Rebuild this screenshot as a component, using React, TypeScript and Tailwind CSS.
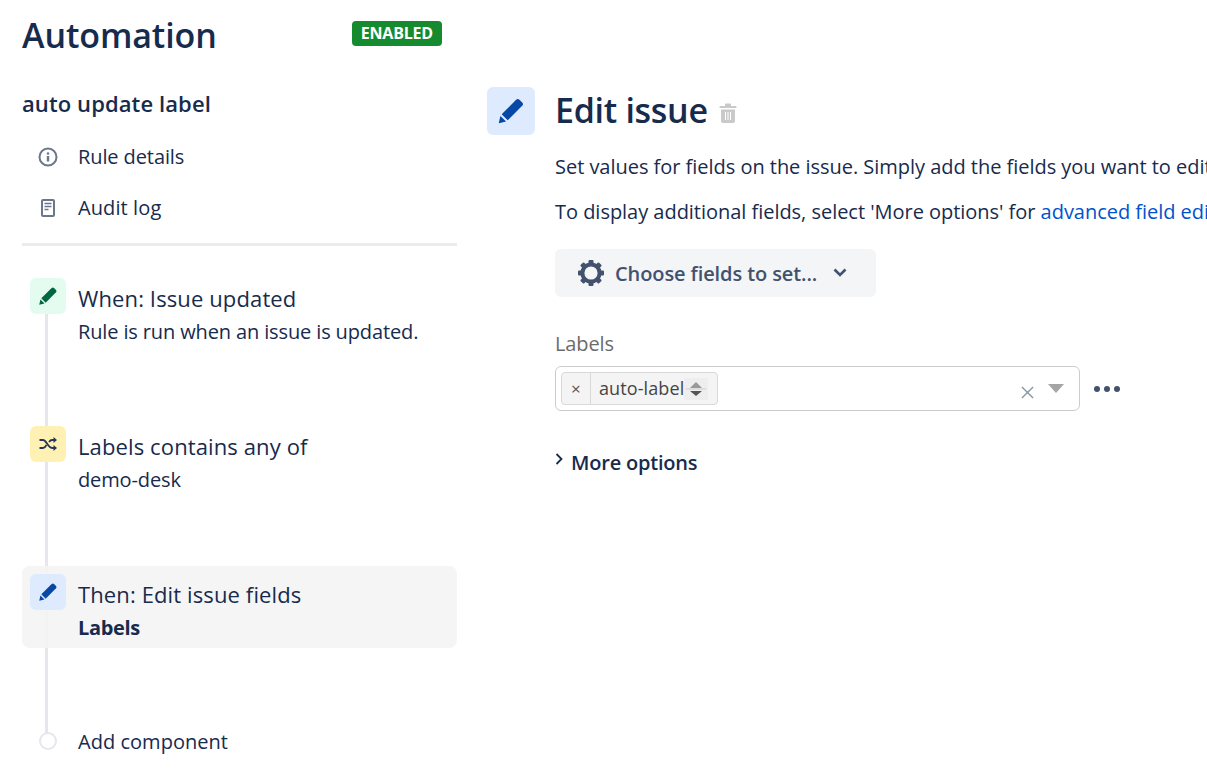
import React from "react";

function Pencil({ className }: { className: string }) {
  return (
    <svg viewBox="0 0 24 24" className={className} fill="currentColor">
      <path d="M16.4 2.4a2 2 0 0 1 2.8 0l2.4 2.4a2 2 0 0 1 0 2.8L9.2 20l-5.2-5.2z" />
      <path d="M2.9 16.2l4.9 4.9L1.5 22.5z" />
    </svg>
  );
}

function Step({
  icon,
  bg,
  title,
  sub,
  bold,
  selected,
}: {
  icon: React.ReactNode;
  bg: string;
  title: string;
  sub: string;
  bold?: boolean;
  selected?: boolean;
}) {
  return (
    <div className={selected ? "h-[82px] rounded-lg bg-[#f4f4f4]/90 px-2 pt-2 flex relative" : "h-[148px] px-2 flex relative"}>
      <div className={"w-9 h-9 rounded-md flex items-center justify-center shrink-0 " + bg}>{icon}</div>
      <div className="ml-3">
        <div className="text-[22px] leading-[26px] mt-[7px] text-[#172b4d] tracking-[0.12px]">{title}</div>
        <div className={"text-[20px] leading-[26px] mt-[8px] text-[#172b4d] " + (bold ? "font-bold tracking-[-0.35px]" : "tracking-[-0.13px]")}>{sub}</div>
      </div>
    </div>
  );
}

export default function App() {
  return (
    <div className="w-[1207px] h-[775px] overflow-hidden bg-white flex font-['Open_Sans',sans-serif] text-[#172b4d]">
      <div className="w-[435px] ml-[22px] shrink-0">
        <div className="flex items-start justify-between pr-[15px] pt-[13px] h-[72px]">
          <h1 className="text-[34px] leading-[44px] font-semibold tracking-[-0.1px]">Automation</h1>
          <span className="mt-2 h-[25px] px-[9px] rounded bg-[#158a2e] text-white text-[16px] leading-[25px] font-bold tracking-[-0.2px]">ENABLED</span>
        </div>
        <div className="text-[22px] leading-[28px] font-semibold mt-[17px] tracking-[0.1px]">auto update label</div>
        <div className="flex items-center h-[24px] mt-[28px] text-[20px] tracking-[-0.1px]">
          <svg viewBox="0 0 20 20" className="w-5 h-5 ml-4 text-[#6b778c]" fill="none">
            <circle cx="10" cy="10" r="8.5" stroke="currentColor" strokeWidth="2" />
            <circle cx="10" cy="6.5" r="1.3" fill="currentColor" />
            <rect x="8.8" y="9" width="2.4" height="5.5" rx="0.6" fill="currentColor" />
          </svg>
          <span className="ml-5">Rule details</span>
        </div>
        <div className="flex items-center h-[24px] mt-[27px] text-[20px] tracking-[0.1px]">
          <svg viewBox="0 0 14 18" className="w-[14px] h-[20px] ml-[19px] text-[#6b778c]" fill="none">
            <rect x="1" y="1" width="12" height="16" rx="1" stroke="currentColor" strokeWidth="2" />
            <path d="M3.5 4.5h7M3.5 7.5h7M3.5 10.5h4" stroke="currentColor" strokeWidth="1.4" />
          </svg>
          <span className="ml-[23px]">Audit log</span>
        </div>
        <div className="h-[3px] bg-[#ebecf0] mt-[23px]" />
        <div className="relative mt-[32px]">
          <div className="absolute left-[23px] top-[36px] w-[3px] h-[420px] bg-[#e6e7ee]" />
          <Step
            bg="bg-[#e3fcef]"
            icon={<Pencil className="w-[20px] h-[20px] text-[#006644]" />}
            title="When: Issue updated"
            sub="Rule is run when an issue is updated."
          />
          <Step
            bg="bg-[#fff0b3]"
            icon={
              <svg viewBox="0 0 20 20" className="w-[20px] h-[20px] text-[#253858]" fill="none" stroke="currentColor" strokeWidth="1.8">
                <path d="M1.5 6h3.5c3.5 0 5 8 9 8h3.5M1.5 14h3.5c1.6 0 2.6-1.4 3.5-3M11 8c.9-1.2 1.8-2 3-2h3.5" />
                <path d="M15.5 3l3.5 3-3.5 3zM15.5 11l3.5 3-3.5 3z" fill="currentColor" stroke="none" />
              </svg>
            }
            title="Labels contains any of"
            sub="demo-desk"
          />
          <div className="-mt-2">
            <Step
              selected
              bold
              bg="bg-[#deebff]"
              icon={<Pencil className="w-[20px] h-[20px] text-[#0747a6]" />}
              title="Then: Edit issue fields"
              sub="Labels"
            />
          </div>
          <div className="flex items-center h-[24px] mt-[82px] text-[20px] tracking-[0.03px]">
            <div className="relative w-[18px] h-[18px] ml-[17px] -mt-[2px] rounded-full border-2 border-[#e6e7ee] bg-white" />
            <span className="ml-[21px]">Add component</span>
          </div>
        </div>
      </div>

      <div className="ml-[30px] pt-[87px] flex-1 min-w-0 flex overflow-hidden">
        <div className="w-12 h-12 rounded-md bg-[#deebff] flex items-center justify-center shrink-0">
          <Pencil className="w-[28px] h-[28px] text-[#0747a6]" />
        </div>
        <div className="ml-5 w-[700px] shrink-0">
          <div className="flex items-center h-[48px]">
            <h2 className="text-[34px] leading-[48px] -mt-[2px] font-semibold -tracking-[0.3px]">Edit issue</h2>
            <svg viewBox="0 0 18 20" className="w-[18px] h-[20px] ml-[11px] mt-[3px] text-[#c9c9c9]" fill="currentColor">
              <path d="M6 1.5A1 1 0 0 1 7 .5h4a1 1 0 0 1 1 1V3h4.5a1 1 0 0 1 1 1v1h-17V4a1 1 0 0 1 1-1H6z" />
              <path d="M2 6.5h14V18a2 2 0 0 1-2 2H4a2 2 0 0 1-2-2zM6 9v8h1V9zm2.5 0v8h1V9zM11 9v8h1V9z" fillRule="evenodd" />
            </svg>
          </div>
          <p className="text-[20px] leading-[26px] mt-[19px] whitespace-nowrap tracking-[-0.03px]">Set values for fields on the issue. Simply add the fields you want to edit</p>
          <p className="text-[20px] leading-[26px] mt-[19px] whitespace-nowrap tracking-[-0.03px]">To display additional fields, select 'More options' for <span className="text-[#0052cc]">advanced field edi</span></p>
          <div className="mt-[24px] w-[321px] h-12 rounded-md bg-[#f4f5f7] flex items-center pl-[22px] text-[#42526e] text-[20px] font-semibold tracking-[-0.1px]">
            <svg viewBox="0 0 28 28" className="w-[28px] h-[28px]" fill="currentColor">
              <circle cx="14" cy="14" r="8.6" fill="none" stroke="currentColor" strokeWidth="4" />
              <g>
                <rect x="11.5" y="1" width="5" height="5" rx="1" />
                <rect x="11.5" y="22" width="5" height="5" rx="1" />
                <rect x="1" y="11.5" width="5" height="5" rx="1" />
                <rect x="22" y="11.5" width="5" height="5" rx="1" />
                <rect x="11.5" y="1" width="5" height="5" rx="1" transform="rotate(45 14 14)" />
                <rect x="11.5" y="22" width="5" height="5" rx="1" transform="rotate(45 14 14)" />
                <rect x="1" y="11.5" width="5" height="5" rx="1" transform="rotate(45 14 14)" />
                <rect x="22" y="11.5" width="5" height="5" rx="1" transform="rotate(45 14 14)" />
              </g>
            </svg>
            <span className="ml-[10px] mt-[2px]">Choose fields to set...</span>
            <svg viewBox="0 0 14 10" className="w-[14px] h-[10px] ml-[16px]" fill="none" stroke="currentColor" strokeWidth="2.6">
              <path d="M1.5 1.5L7 7l5.5-5.5" />
            </svg>
          </div>
          <div className="mt-[34px] text-[20px] leading-[26px] text-[#6b6b6b] tracking-[-0.1px]">Labels</div>
          <div className="flex items-center mt-[9px]">
            <div className="w-[525px] h-[45px] rounded-md border border-[#cccccc] flex items-center pl-[5px] pr-4">
              <div className="h-[33px] rounded border border-[#d9d9d9] bg-[#f4f4f4] flex items-center text-[#444] text-[18px] tracking-[0.1px]">
                <span className="w-[29px] h-full border-r border-[#d9d9d9] flex items-center justify-center text-[#555] text-[17px]">×</span>
                <span className="pl-2">auto-label</span>
                <svg viewBox="0 0 24 22" className="w-[24px] h-[22px] mr-[9px] bg-[#eeeeee]">
                  <path d="M12 4l6 6H6z" fill="#999" />
                  <path d="M2 11h20" stroke="#ccc" />
                  <path d="M12 18l6-5H6z" fill="#555" />
                </svg>
              </div>
              <div className="flex-1" />
              <svg viewBox="0 0 14 14" className="w-[13px] h-[13px] mt-2 mr-[14px] text-[#8a96a3]" stroke="currentColor" strokeWidth="1.5">
                <path d="M1 1l12 12M13 1L1 13" />
              </svg>
              <svg viewBox="0 0 16 9" className="w-4 h-[9px] -mt-[1px] -mr-[1px] text-[#a5a5a5]" fill="currentColor">
                <path d="M0 0h16L8 9z" />
              </svg>
            </div>
            <div className="flex gap-1 ml-[14px] mt-[1px]">
              <span className="w-[6px] h-[6px] rounded-full bg-[#42526e]" />
              <span className="w-[6px] h-[6px] rounded-full bg-[#42526e]" />
              <span className="w-[6px] h-[6px] rounded-full bg-[#42526e]" />
            </div>
          </div>
          <div className="flex items-center mt-[38px] h-[28px] text-[20px] font-semibold tracking-[-0.2px]">
            <svg viewBox="0 0 8 12" className="w-[8px] h-[12px] -mt-[8px]" fill="none" stroke="currentColor" strokeWidth="1.8">
              <path d="M1.5 1L6.5 6l-5 5" />
            </svg>
            <span className="ml-[8px]">More options</span>
          </div>
        </div>
      </div>
    </div>
  );
}
